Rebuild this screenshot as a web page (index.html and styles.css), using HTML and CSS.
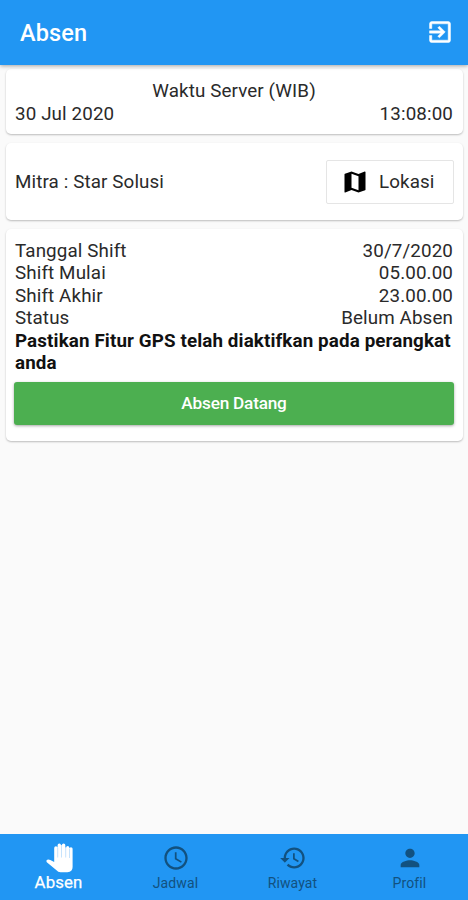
FILE: index.html
```html
<!DOCTYPE html>
<html lang="id">
<head>
<meta charset="utf-8">
<title>Absen</title>
<link rel="stylesheet" href="styles.css">
</head>
<body>
<header class="appbar">
  <h1 class="title">Absen</h1>
  <svg class="icon exit" viewBox="0 0 24 24"><path d="M10.09 15.59L11.5 17l5-5-5-5-1.41 1.41L12.67 11H3v2h9.67l-2.58 2.59zM19 3H5c-1.11 0-2 .9-2 2v4h2V5h14v14H5v-4H3v4c0 1.1.89 2 2 2h14c1.1 0 2-.9 2-2V5c0-1.1-.9-2-2-2z"/></svg>
</header>
<main class="content">
  <section class="card server">
    <div class="center">Waktu Server (WIB)</div>
    <div class="row"><span>30 Jul 2020</span><span>13:08:00</span></div>
  </section>
  <section class="card partner">
    <span>Mitra : Star Solusi</span>
    <button class="location">
      <svg class="icon map" viewBox="0 0 24 24"><path d="M20.5 3l-.16.03L15 5.1 9 3 3.36 4.9c-.21.07-.36.25-.36.48V20.5c0 .28.22.5.5.5l.16-.03L9 18.9l6 2.1 5.64-1.9c.21-.07.36-.25.36-.48V3.5c0-.28-.22-.5-.5-.5zM15 19l-6-2.11V5l6 2.11V19z"/></svg>
      <span>Lokasi</span>
    </button>
  </section>
  <section class="card shift">
    <div class="row"><span>Tanggal Shift</span><span>30/7/2020</span></div>
    <div class="row"><span>Shift Mulai</span><span>05.00.00</span></div>
    <div class="row"><span>Shift Akhir</span><span>23.00.00</span></div>
    <div class="row"><span>Status</span><span>Belum Absen</span></div>
    <p class="notice">Pastikan Fitur GPS telah diaktifkan pada perangkat anda</p>
    <button class="checkin">Absen Datang</button>
  </section>
</main>
<nav class="tabs">
  <a class="tab active">
    <svg class="icon hand" viewBox="0 0 27 30"><path d="M8.2 16V5a1.7 1.7 0 0 1 3.4 0V2.2a1.7 1.7 0 0 1 3.4 0h.9v-.1a1.7 1.7 0 0 1 3.4 0V4.6h.8a1.6 1.6 0 0 1 3.2 0V5.8a1.65 1.65 0 0 1 3.3 0V24q0 5-5.2 5.3H14.5q-2.5 0-4-2L.8 19.2Q-.2 17.5 1.3 16.7q1.4-.6 3 .4L8.2 19z"/><path class="gaps" d="M11.7 5v9.5M15.5 2.5v12M19.7 4v10.5M23.5 6v9"/></svg>
    <span>Absen</span>
  </a>
  <a class="tab">
    <svg class="icon" viewBox="0 0 24 24"><path d="M11.99 2C6.47 2 2 6.48 2 12s4.47 10 9.99 10C17.52 22 22 17.52 22 12S17.52 2 11.99 2zM12 20c-4.42 0-8-3.58-8-8s3.58-8 8-8 8 3.58 8 8-3.58 8-8 8zM12.5 7H11v6l5.25 3.15.75-1.23-4.5-2.67z"/></svg>
    <span>Jadwal</span>
  </a>
  <a class="tab">
    <svg class="icon" viewBox="0 0 24 24"><path d="M13 3c-4.97 0-9 4.03-9 9H1l3.89 3.89.07.14L9 12H6c0-3.87 3.13-7 7-7s7 3.13 7 7-3.13 7-7 7c-1.93 0-3.68-.79-4.94-2.06l-1.42 1.42C8.27 19.99 10.51 21 13 21c4.97 0 9-4.03 9-9s-4.03-9-9-9zm-1 5v5l4.28 2.54.72-1.21-3.5-2.08V8H12z"/></svg>
    <span>Riwayat</span>
  </a>
  <a class="tab">
    <svg class="icon" viewBox="0 0 24 24"><path d="M12 12c2.21 0 4-1.79 4-4s-1.79-4-4-4-4 1.79-4 4 1.79 4 4 4zm0 2c-2.67 0-8 1.34-8 4v2h16v-2c0-2.66-5.33-4-8-4z"/></svg>
    <span>Profil</span>
  </a>
</nav>
</body>
</html>
```
FILE: styles.css
```css
* { box-sizing: border-box; }
body {
  margin: 0;
  height: 900px;
  display: flex;
  flex-direction: column;
  background: #fafafa;
  color: #2a2a2a;
  font: 400 18.8px/22.6px Roboto, sans-serif;
  letter-spacing: 0.12px;
}
.icon { display: block; width: 28px; height: 28px; fill: currentColor; }
.appbar {
  height: 65px;
  padding: 0 14px 1px 20px;
  display: flex;
  align-items: center;
  justify-content: space-between;
  background: #2196f3;
  color: #fff;
  box-shadow: 0 1px 4px rgba(0, 0, 0, .35);
  position: relative;
}
.exit { stroke: currentColor; stroke-width: .4; }
.title { margin: 0; padding-top: 2px; font-size: 23.5px; font-weight: 500; }
.content { flex: 1; padding: 4px 5px 0 6px; }
.card {
  background: #fff;
  border-radius: 5px;
  box-shadow: 0 1px 2px rgba(0, 0, 0, .25);
  padding: 11px 10px 0 9px;
  margin-bottom: 9px;
}
.server { height: 65px; }
.center { text-align: center; }
.row { display: flex; justify-content: space-between; }
.partner {
  height: 77px;
  padding-top: 1px;
  display: flex;
  align-items: center;
  justify-content: space-between;
}
button { border: 0; font: inherit; letter-spacing: inherit; color: inherit; }
.location {
  width: 128px;
  height: 44px;
  margin-right: -1px;
  padding: 0 0 0 14px;
  display: flex;
  align-items: center;
  gap: 10px;
  background: #fff;
  border: 1px solid #e5e5e5;
  border-radius: 2px;
}
.map { color: #000; }
.shift { height: 212px; padding-top: 10.5px; }
.notice { margin: 0; font-weight: 700; color: #111; }
.checkin {
  display: block;
  width: 440px;
  height: 43px;
  margin: 6.5px 0 0 -1px;
  border-radius: 3px;
  background: #4caf50;
  color: #fff;
  font-size: 17.2px;
  letter-spacing: -0.2px;
  font-weight: 500;
  box-shadow: 0 1px 3px rgba(0, 0, 0, .35);
}
.tabs {
  height: 66px;
  display: flex;
  background: #2196f3;
  color: #12517f;
  font-size: 14px;
  line-height: 16px;
}
.tab {
  flex: 1;
  display: flex;
  flex-direction: column;
  align-items: center;
  padding-top: 9.5px;
  gap: 3.5px;
}
.active { color: #fff; font-size: 17px; padding-top: 9px; gap: 1px; }
.active span { font-size: 16.8px; -webkit-text-stroke: .25px currentColor; }
.hand { width: 27px; height: 30px; margin-left: 2px; }
.gaps { fill: none; stroke: #9fd0fa; stroke-width: .6; }
```
